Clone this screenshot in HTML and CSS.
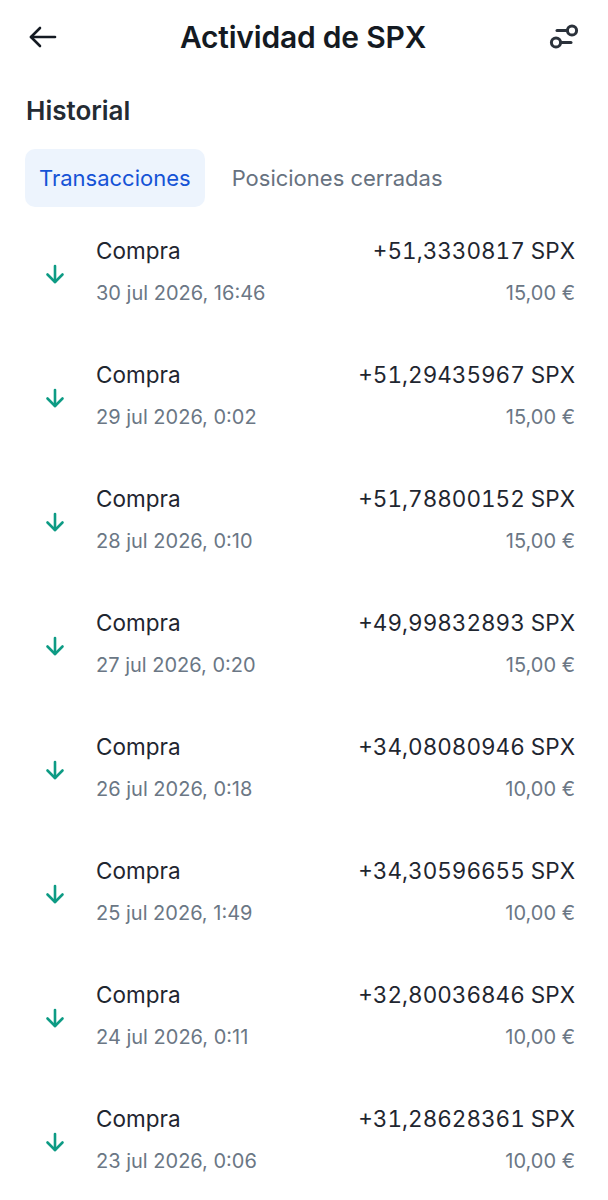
FILE: index.html
```html
<!DOCTYPE html>
<html lang="es">
<head>
    <meta charset="UTF-8">
    <meta name="viewport" content="width=device-width, initial-scale=1.0">
    <title>Actividad de SPX</title>
    <link rel="stylesheet" href="styles.css">
</head>
<body>
    <header class="topbar">
        <button class="icon-btn" aria-label="Volver">
            <svg width="30" height="24" viewBox="0 0 30 24" fill="none" stroke="#141a22" stroke-width="2.6" stroke-linecap="round" stroke-linejoin="round">
                <path d="M27 12H3"/>
                <path d="M12 3L3 12L12 21"/>
            </svg>
        </button>
        <h1>Actividad de SPX</h1>
        <button class="icon-btn" aria-label="Filtros">
            <svg width="32" height="30" viewBox="0 0 32 30" fill="none" stroke="#2b323b" stroke-width="3" stroke-linecap="round">
                <circle cx="24" cy="8.5" r="4.6"/>
                <path d="M19 8.5H9"/>
                <circle cx="8" cy="20.5" r="4.6"/>
                <path d="M13 20.5H23"/>
            </svg>
        </button>
    </header>

    <main class="content">
        <h2>Historial</h2>
        <nav class="tabs">
            <span class="tab active">Transacciones</span>
            <span class="tab">Posiciones cerradas</span>
        </nav>

        <ul class="list">
            <li class="row">
                <span class="arrow"><svg width="22" height="20" viewBox="0 0 22 20" fill="none" stroke="#0d9b84" stroke-width="2.6" stroke-linecap="round" stroke-linejoin="round"><path d="M11 2V18"/><path d="M3.5 10.5L11 18L18.5 10.5"/></svg></span>
                <div class="info">
                    <div class="line"><span class="name">Compra</span><span class="qty">+51,3330817 SPX</span></div>
                    <div class="line sub"><span>30 jul 2026, 16:46</span><span>15,00 €</span></div>
                </div>
            </li>
            <li class="row">
                <span class="arrow"><svg width="22" height="20" viewBox="0 0 22 20" fill="none" stroke="#0d9b84" stroke-width="2.6" stroke-linecap="round" stroke-linejoin="round"><path d="M11 2V18"/><path d="M3.5 10.5L11 18L18.5 10.5"/></svg></span>
                <div class="info">
                    <div class="line"><span class="name">Compra</span><span class="qty">+51,29435967 SPX</span></div>
                    <div class="line sub"><span>29 jul 2026, 0:02</span><span>15,00 €</span></div>
                </div>
            </li>
            <li class="row">
                <span class="arrow"><svg width="22" height="20" viewBox="0 0 22 20" fill="none" stroke="#0d9b84" stroke-width="2.6" stroke-linecap="round" stroke-linejoin="round"><path d="M11 2V18"/><path d="M3.5 10.5L11 18L18.5 10.5"/></svg></span>
                <div class="info">
                    <div class="line"><span class="name">Compra</span><span class="qty">+51,78800152 SPX</span></div>
                    <div class="line sub"><span>28 jul 2026, 0:10</span><span>15,00 €</span></div>
                </div>
            </li>
            <li class="row">
                <span class="arrow"><svg width="22" height="20" viewBox="0 0 22 20" fill="none" stroke="#0d9b84" stroke-width="2.6" stroke-linecap="round" stroke-linejoin="round"><path d="M11 2V18"/><path d="M3.5 10.5L11 18L18.5 10.5"/></svg></span>
                <div class="info">
                    <div class="line"><span class="name">Compra</span><span class="qty">+49,99832893 SPX</span></div>
                    <div class="line sub"><span>27 jul 2026, 0:20</span><span>15,00 €</span></div>
                </div>
            </li>
            <li class="row">
                <span class="arrow"><svg width="22" height="20" viewBox="0 0 22 20" fill="none" stroke="#0d9b84" stroke-width="2.6" stroke-linecap="round" stroke-linejoin="round"><path d="M11 2V18"/><path d="M3.5 10.5L11 18L18.5 10.5"/></svg></span>
                <div class="info">
                    <div class="line"><span class="name">Compra</span><span class="qty">+34,08080946 SPX</span></div>
                    <div class="line sub"><span>26 jul 2026, 0:18</span><span>10,00 €</span></div>
                </div>
            </li>
            <li class="row">
                <span class="arrow"><svg width="22" height="20" viewBox="0 0 22 20" fill="none" stroke="#0d9b84" stroke-width="2.6" stroke-linecap="round" stroke-linejoin="round"><path d="M11 2V18"/><path d="M3.5 10.5L11 18L18.5 10.5"/></svg></span>
                <div class="info">
                    <div class="line"><span class="name">Compra</span><span class="qty">+34,30596655 SPX</span></div>
                    <div class="line sub"><span>25 jul 2026, 1:49</span><span>10,00 €</span></div>
                </div>
            </li>
            <li class="row">
                <span class="arrow"><svg width="22" height="20" viewBox="0 0 22 20" fill="none" stroke="#0d9b84" stroke-width="2.6" stroke-linecap="round" stroke-linejoin="round"><path d="M11 2V18"/><path d="M3.5 10.5L11 18L18.5 10.5"/></svg></span>
                <div class="info">
                    <div class="line"><span class="name">Compra</span><span class="qty">+32,80036846 SPX</span></div>
                    <div class="line sub"><span>24 jul 2026, 0:11</span><span>10,00 €</span></div>
                </div>
            </li>
            <li class="row">
                <span class="arrow"><svg width="22" height="20" viewBox="0 0 22 20" fill="none" stroke="#0d9b84" stroke-width="2.6" stroke-linecap="round" stroke-linejoin="round"><path d="M11 2V18"/><path d="M3.5 10.5L11 18L18.5 10.5"/></svg></span>
                <div class="info">
                    <div class="line"><span class="name">Compra</span><span class="qty">+31,28628361 SPX</span></div>
                    <div class="line sub"><span>23 jul 2026, 0:06</span><span>10,00 €</span></div>
                </div>
            </li>
        </ul>
    </main>
</body>
</html>
```

FILE: styles.css
```css
body {
    font-family: 'Inter', 'Noto Sans', sans-serif;
    background-color: #ffffff;
    color: #1f2630;
    margin: 0;
    padding: 0;
}
.topbar {
    height: 74px;
    padding: 0 28px 0 28px;
    display: flex;
    align-items: center;
    justify-content: space-between;
}
.topbar h1 {
    margin: 0;
    font-size: 30px;
    font-weight: 600;
    color: #141a22;
    letter-spacing: -0.2px;
}
.icon-btn {
    background: none;
    border: none;
    padding: 0;
    display: flex;
    align-items: center;
    cursor: pointer;
}
.content {
    padding: 0 33px 0 25px;
}
h2 {
    margin: 20px 0 0 1px;
    font-size: 26px;
    font-weight: 600;
    line-height: 34px;
    color: #242b33;
}
.tabs {
    margin-top: 21px;
    display: flex;
}
.tab {
    height: 58px;
    padding: 0 14px;
    display: flex;
    align-items: center;
    border-radius: 10px;
    font-size: 22px;
    color: #67727f;
    margin-right: 13px;
}
.tab.active {
    background-color: #edf4fd;
    color: #1553d6;
}
.list {
    list-style: none;
    margin: 3px 0 0 1px;
    padding: 0;
}
.row {
    height: 124px;
    display: flex;
    align-items: center;
}
.arrow {
    width: 70px;
    padding-left: 18px;
    box-sizing: border-box;
    display: flex;
    margin-top: 4px;
}
.info {
    flex: 1;
    display: flex;
    flex-direction: column;
    gap: 14px;
}
.line {
    display: flex;
    justify-content: space-between;
    font-size: 22.5px;
    line-height: 29px;
    color: #1f2630;
}
.qty {
    font-variant-numeric: tabular-nums;
}
.line.sub {
    color: #6b7785;
    font-size: 20px;
}
```
